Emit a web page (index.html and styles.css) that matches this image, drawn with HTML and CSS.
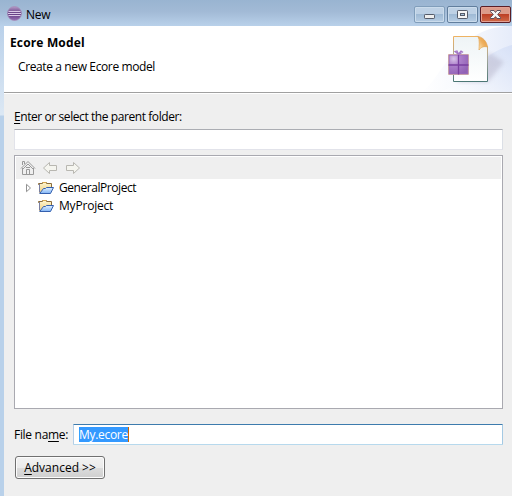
FILE: index.html
```html
<!DOCTYPE html>
<html lang="en">
<head>
<meta charset="utf-8">
<title>New</title>
<link rel="stylesheet" href="styles.css">
</head>
<body>
<svg width="0" height="0" class="defs">
  <defs>
    <linearGradient id="purple" x1="0" y1="0" x2="0" y2="1"><stop offset="0" stop-color="#b79cc8"/><stop offset=".5" stop-color="#60397f"/><stop offset="1" stop-color="#9670b4"/></linearGradient>
    <linearGradient id="blue" x1="0" y1="0" x2="0" y2="1"><stop offset="0" stop-color="#e0f0ff"/><stop offset="1" stop-color="#80b4f6"/></linearGradient>
    <linearGradient id="tan" x1="0" y1="0" x2="0" y2="1"><stop offset="0" stop-color="#fff6cf"/><stop offset="1" stop-color="#efd084"/></linearGradient>
    <symbol id="folder" viewBox="0 0 16 14">
      <path d="M1.500 11.500V3.500H.5V2.500H4.500V1.500H8.500V2.500H13.500V6" fill="url(#tan)" stroke="#8a6c3c"/>
      <path d="M1.500 3V11" stroke="#7a7fa0"/>
      <path d="M4.500 1.500H8.500" stroke="#d5a64c"/>
      <path d="M1.700 12.500L5.500 7.500H7.500L8.500 6.500H15.500L12.500 12.500Z" fill="url(#blue)" stroke="#3560ae"/>
    </symbol>
  </defs>
</svg>
<div class="window">
  <header class="titlebar">
    <svg class="app-icon" width="16" height="16" viewBox="0 0 16 16">
      <circle cx="7.500" cy="7.500" r="7" fill="url(#purple)" stroke="#a68bb8" stroke-width=".7"/>
      <path d="M1.500 5.500H13.500M1 7.500H14M1.500 9.500H13.500" stroke="#d9c9e6"/>
    </svg>
    <span class="title">New</span>
    <div class="controls">
      <div class="ctl"><svg width="29" height="15" viewBox="0 0 29 15"><rect x="9.500" y="7.500" width="10" height="4" rx=".7" fill="#eee" stroke="#555b69"/></svg></div>
      <div class="ctl"><svg width="29" height="15" viewBox="0 0 29 15"><rect x="9.500" y="3.500" width="10" height="8" rx=".7" fill="#f4f4f4" stroke="#555b69"/><rect x="12.500" y="6.500" width="4" height="2" fill="#a8c3dc" stroke="#555b69"/></svg></div>
      <div class="ctl close"><svg width="29" height="15" viewBox="0 0 29 15"><path d="M9.500 3.500H13L14.500 5.500L16 3.500H19.500V4.500L16.700 7.500L19.500 10.500V11.500H16L14.500 9.600L13 11.500H9.500V10.500L12.300 7.500L9.500 4.500Z" fill="#f4f4f4" stroke="#5d4e5b"/></svg></div>
    </div>
  </header>
  <section class="banner">
    <div class="banner-text">
      <h1><span class="heading">Ecore Model</span></h1>
      <p><span class="subtitle">Create a new Ecore model</span></p>
    </div>
    <svg class="banner-art" width="92" height="66" viewBox="0 0 92 66">
      <defs>
        <linearGradient id="wash"><stop offset="0" stop-color="#fff"/><stop offset=".55" stop-color="#f5f7fd"/><stop offset="1" stop-color="#e6ecfa"/></linearGradient>
        <linearGradient id="swoop" x1="0" y1="1" x2="1" y2="0"><stop offset="0" stop-color="#fff" stop-opacity=".7"/><stop offset="1" stop-color="#d3def6" stop-opacity=".8"/></linearGradient>
        <linearGradient id="page" x1="0" y1="0" x2="0" y2="1"><stop offset="0" stop-color="#eef4f6"/><stop offset="1" stop-color="#fff"/></linearGradient>
        <linearGradient id="edge" x1="0" y1="0" x2="0" y2="1"><stop offset="0" stop-color="#eeb363"/><stop offset=".5" stop-color="#a4a79b"/><stop offset="1" stop-color="#4c7775"/></linearGradient>
        <linearGradient id="curl" x1="0" y1="1" x2="1" y2="0"><stop offset="0" stop-color="#fff0c8"/><stop offset=".5" stop-color="#eeb060"/><stop offset="1" stop-color="#e49537"/></linearGradient>
        <radialGradient id="gift" cx=".25" cy=".2" r=".9"><stop offset="0" stop-color="#d8c4e8"/><stop offset=".4" stop-color="#ac7fca"/><stop offset="1" stop-color="#9161b5"/></radialGradient>
        <filter id="soft"><feGaussianBlur stdDeviation="2"/></filter>
      </defs>
      <path d="M0 66C18 62 32 0 92 0V66Z" fill="url(#wash)"/>
      <path d="M20 66C48 58 54 30 92 19V66Z" fill="url(#swoop)"/>
      <path d="M36 56L70 27L84 36L68 56Z" fill="#a9a5bd" opacity=".4" filter="url(#soft)"/>
      <path d="M33.500 10.500H58L67.500 21V55.500H33.500Z" fill="url(#page)" stroke="url(#edge)"/>
      <path d="M58 10.500C60 14 59 20 59 24C61 21 64 20 67.500 21C67 16 63 11 58 10.500Z" fill="url(#curl)" stroke="#e4a552" stroke-width=".7"/>
      <rect x="28" y="28" width="21" height="21" rx="1" fill="#f0d39b"/>
      <rect x="29" y="29" width="19" height="19" fill="url(#gift)" stroke="#9a6cbb"/>
      <path d="M38.500 28.500V48.500M28.500 39H48.500" stroke="#7a3fa0" stroke-width="1.300"/>
      <path d="M38.500 28.500L35 25.500L37 25L38.500 28L41 25L42.500 26L39 28.500" fill="none" stroke="#a477c6" stroke-width="1.200"/>
    </svg>
  </section>
  <main class="content">
    <label class="parent-label"><span class="parent"><u>E</u>nter or select the parent folder:</span></label>
    <div class="field"></div>
    <div class="tree">
      <div class="toolbar">
        <svg width="16" height="16" viewBox="0 0 16 16" fill="none" stroke="#999"><path d="M2.500 8V14.500H13.500V8M1 8.500L8 1.500L15 8.500M3 9L8 4L13 9M2.500 5V1.500H4.500V4M6.500 14V9.500H9.500V14M6 7.500H10" /></svg>
        <svg width="16" height="16" viewBox="0 0 16 16"><path d="M1.500 8L7.500 2.500V5.500H14.500V10.500H7.500V13.500Z" fill="#f5f5ef" stroke="#b8b7b1"/></svg>
        <svg width="16" height="16" viewBox="0 0 16 16"><path d="M14.500 8L8.500 2.500V5.500H1.500V10.500H8.500V13.500Z" fill="#f5f5ef" stroke="#b8b7b1"/></svg>
      </div>
      <div class="row">
        <svg class="twisty" width="7" height="10" viewBox="0 0 7 10"><path d="M1.500 1.300V8.700L5.500 5Z" fill="#fff" stroke="#929292"/></svg>
        <svg width="16" height="14"><use href="#folder"/></svg>
        <span class="general">GeneralProject</span>
      </div>
      <div class="row">
        <span class="twisty"></span>
        <svg width="16" height="14"><use href="#folder"/></svg>
        <span class="my">MyProject</span>
      </div>
    </div>
    <div class="file-row">
      <label><span class="filename">File na<u>m</u>e:</span></label>
      <div class="field focused"><span class="selection"><span class="value">My.ecore</span></span></div>
    </div>
    <button class="advanced"><span class="adv"><u>A</u>dvanced &gt;&gt;</span></button>
  </main>
</div>
</body>
</html>
```
FILE: styles.css
```css
* { box-sizing: border-box; }
body { margin: 0; overflow: hidden; font: 12px/16px "Open Sans", "Noto Sans", sans-serif; color: #000; }
.defs { position: absolute; }
svg { display: block; flex: none; }
span { white-space: nowrap; }
u { text-decoration: underline; text-decoration-thickness: 1px; text-underline-offset: 2px; text-decoration-skip-ink: none; }
.window { width: 512px; height: 496px; padding-left: 4px; background: linear-gradient(#9ab6d4 0, #bad1ea 26px, #dce8f4 115px, #b9d1ea 116px); }
.titlebar { height: 26px; margin-left: -4px; display: flex; padding: 6px 1px 0 7px; background: linear-gradient(#99b4d1, #a2bad6 45%, #b9d1ea); }
.app-icon { margin-right: 3px; }
.title { margin-top: 1px; letter-spacing: -.2px; }
.controls { margin-left: auto; display: flex; gap: 2px; }
.ctl { width: 31px; height: 17px; border: 1px solid #617e9d; border-radius: 2px; box-shadow: inset 0 0 0 1px #cbdcec; background: linear-gradient(#bed1e5 47%, #9fbad5 50%, #b7cde4); }
.ctl:first-child { border-color: #819ebb; }
.ctl.close { border-color: #5a1e26; box-shadow: inset 0 0 0 1px #e4a092; background: linear-gradient(#dc9b8a 45%, #bd4026 50%, #d06b48); }
.banner { height: 68px; display: flex; justify-content: space-between; background: linear-gradient(#fff 66px, #a0a0a0 66px, #a0a0a0 67px, #fff 67px); }
.banner-text { padding: 9px 0 0 6px; }
h1 { margin: 0; font-size: 12px; font-weight: bold; line-height: 16px; }
.heading { letter-spacing: .15px; }
p { margin: 8px 0 0 8px; }
.subtitle { letter-spacing: -.38px; }
.content { height: 402px; padding: 15px 9px 0 10px; background: #efefef; }
.parent-label { display: block; height: 20px; }
.parent { letter-spacing: -.42px; }
.field { height: 21px; border: 1px solid #e2e3ea; border-top-color: #abadb3; border-right-color: #dbdfe6; background: #fff; }
.tree { height: 254px; margin-top: 5px; border: 1px solid #a9a9b0; padding: 1px; background: #fff; }
.toolbar { height: 22px; display: flex; gap: 7px; padding: 3px 0 0 4px; background: #efefef; }
.toolbar svg + svg { position: relative; left: -1px; }
.row { height: 18px; display: flex; align-items: center; padding-left: 9px; }
.twisty { width: 7px; margin-right: 6px; }
.row > span:last-child { margin-left: 5px; }
.general { letter-spacing: -.44px; }
.my { letter-spacing: -.2px; }
.file-row { display: flex; margin-top: 15px; }
.file-row label { width: 59px; padding-top: 3px; }
.filename, .value { letter-spacing: -.3px; }
.focused { flex: 1; padding: 2px 5px; border-color: #3d7bad #a4c9e3 #b7d9ed #b5cfe7; border-radius: 1px; }
.selection { display: inline-block; width: 50px; height: 15px; line-height: 15px; background: #39f; color: #fff; border-right: 1px solid #c60; vertical-align: top; }
.advanced { display: block; width: 90px; height: 23px; margin: 11px 0 0 1px; padding: 0; border: 1px solid #707070; border-radius: 3px; box-shadow: inset 0 0 0 1px #fcfcfc; background: linear-gradient(#f2f2f2, #ebebeb 50%, #ddd 50%, #cfcfcf); font: inherit; color: #000; }
.adv { letter-spacing: 0; }
```
